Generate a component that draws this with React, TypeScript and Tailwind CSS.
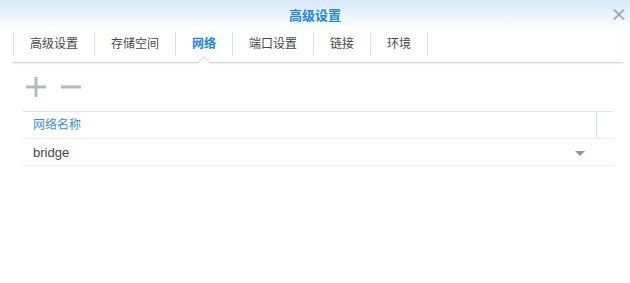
const tabs = ['高级设置', '存储空间', '网络', '端口设置', '链接', '环境'];
const activeTab = '网络';

export default function App() {
  return (
    <div
      className="w-[630px] h-[283px] bg-white relative overflow-hidden"
      style={{ fontFamily: '"Liberation Sans", "Noto Sans CJK SC", sans-serif' }}
    >
      {/* Title bar */}
      <div className="h-[30px] bg-gradient-to-b from-[#d6e8f8] to-white flex items-center justify-center">
        <span className="text-[13px] font-bold text-[#1b87e3] leading-none">高级设置</span>
      </div>
      <button className="absolute left-[613px] top-[9px] w-[12px] h-[11px]">
        <svg width="12" height="11" viewBox="0 0 12 11">
          <path d="M1 0.5 L11 10.5 M11 0.5 L1 10.5" stroke="#a5aab0" strokeWidth="1.8" />
        </svg>
      </button>

      {/* Tabs */}
      <div className="mx-[13px] mt-[2px] pb-[6px] border-b border-[#d3d6d9] shadow-[0_1px_1px_rgba(0,0,0,0.06)] relative w-[610px]">
        <div className="flex">
          {tabs.map((t, i) => (
            <div
              key={t}
              className={
                'relative h-[24px] px-4 flex items-center border-l border-[#d9e1e8] text-[12px] ' +
                (i === tabs.length - 1 ? 'border-r ' : '') +
                (t === activeTab ? 'text-[#1b87e3] font-bold' : 'text-[#45494d]')
              }
            >
              {t}
              {t === activeTab && (
                <div className="absolute left-1/2 -translate-x-1/2 bottom-[-11px] w-[9px] h-[9px] rotate-45 bg-white border-l border-t border-[#d3d6d9]" />
              )}
            </div>
          ))}
        </div>
      </div>

      {/* Toolbar */}
      <div className="flex items-center gap-[15px] ml-[26px] mt-[14px] h-[20px]">
        <svg width="20" height="20" viewBox="0 0 20 20">
          <rect x="0" y="8.5" width="20" height="3" fill="#b5b9be" />
          <rect x="8.5" y="0" width="3" height="20" fill="#b5b9be" />
        </svg>
        <svg width="20" height="20" viewBox="0 0 20 20">
          <rect x="0" y="8.5" width="20" height="3" fill="#b5b9be" />
        </svg>
      </div>

      {/* Table */}
      <div className="ml-[23px] mt-[14px] w-[590px]">
        <div className="h-[27px] border-t border-[#d8e3ee] flex">
          <div className="flex-1 pl-[10px] flex items-center text-[12px] text-[#3a8ee0]">网络名称</div>
          <div className="w-[17px] border-l border-[#d8e3ee]" />
        </div>
        <div className="h-[28px] border-t border-[#e9edf0] border-b flex items-center">
          <div className="flex-1 pl-[10px] pt-[2px] text-[13px] text-[#404448]">bridge</div>
          <svg width="10" height="5" viewBox="0 0 10 5" className="mr-[28px] mt-[2px]">
            <polygon points="0,0 10,0 5,5" fill="#8d98a3" />
          </svg>
        </div>
      </div>
    </div>
  );
}
